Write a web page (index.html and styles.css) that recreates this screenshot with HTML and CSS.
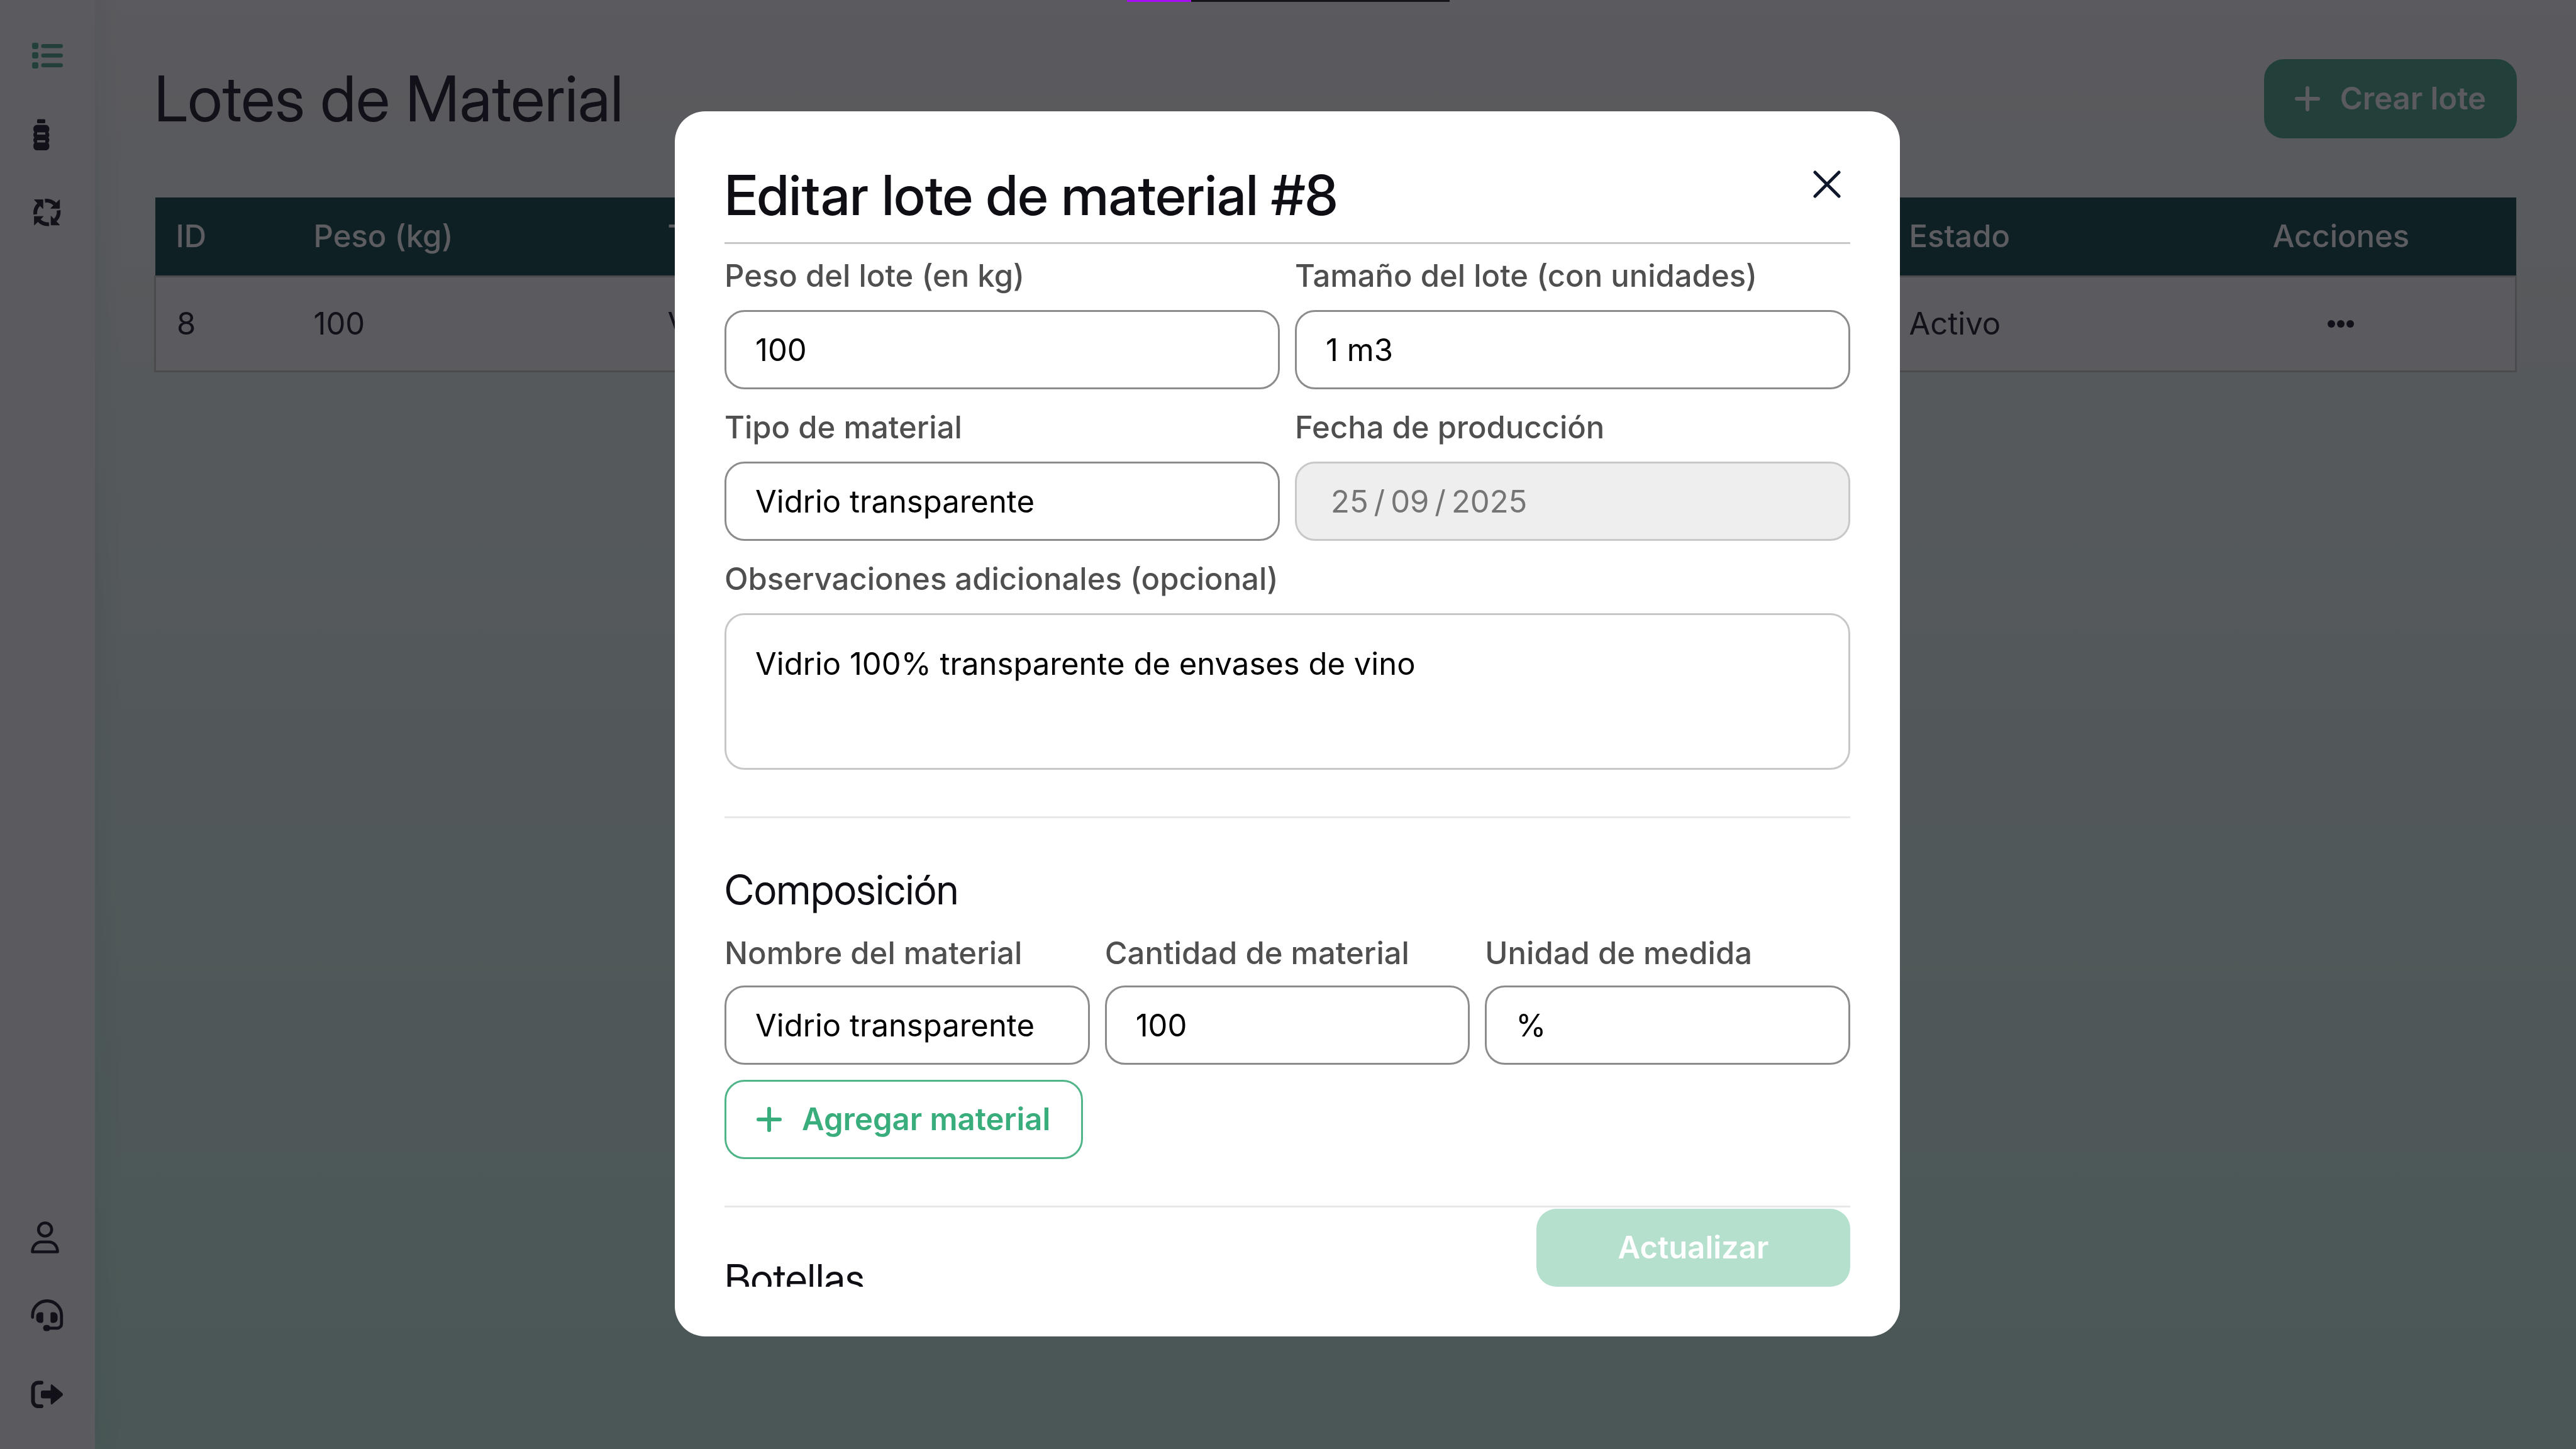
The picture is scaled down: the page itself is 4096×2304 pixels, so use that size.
FILE: index.html
```html
<!DOCTYPE html>
<html lang="es">
<head>
<meta charset="utf-8">
<meta name="viewport" content="width=device-width, initial-scale=1">
<title>Lotes de Material</title>
<link rel="stylesheet" href="styles.css">
</head>
<body>
<div class="app">
  <nav class="sidebar" aria-label="Principal">
    <div class="sidebar-group">
      <a class="nav-link active" href="#lotes" aria-label="Lotes">
        <svg class="nav-icon" viewBox="0 0 74 74" fill="currentColor"><rect x="13" y="17" width="10" height="10" rx="3"/><rect x="13" y="32" width="10" height="10" rx="3"/><rect x="13" y="48" width="10" height="10" rx="3"/><rect x="27.500" y="19" width="34.500" height="6.500" rx="3.200"/><rect x="27.500" y="34" width="34.500" height="6.500" rx="3.200"/><rect x="27.500" y="49.500" width="34.500" height="6.500" rx="3.200"/></svg>
      </a>
      <a class="nav-link" href="#botellas" aria-label="Botellas">
        <svg class="nav-icon" viewBox="0 0 74 74" fill="currentColor"><rect x="21" y="13.500" width="13" height="6.500" rx="1.500"/><path fill-rule="evenodd" d="M21 22.500H34.500C38 22.500 40.500 25.500 40.500 29Q40.500 32 38.800 34Q40.500 36 40.500 38.500T38.800 42.700Q40.500 44.500 40.500 46.500T38.800 51Q40.500 53 40.500 56C40.500 60.500 38 63 34.500 63H21C17.500 63 15 60.500 15 56Q15 53 16.700 51Q15 48.500 15 46.500T16.700 42.700Q15 41 15 38.500T16.700 34Q15 32 15 29C15 25.500 17.500 22.500 21 22.500ZM21 34.500V38H34V34.500ZM21 47V50.500H34V47Z"/></svg>
      </a>
      <a class="nav-link" href="#reciclaje" aria-label="Reciclaje">
        <svg class="nav-icon" viewBox="0 0 74 74"><defs><g id="arrow"><path d="M-3.200 -18.500A18.500 18.500 0 0 1 12.500 -13" fill="none" stroke="currentColor" stroke-width="6"/><path d="M20 -20V-6.500H6Z" fill="currentColor" stroke="currentColor" stroke-linejoin="round"/></g></defs><g transform="translate(36.700 36.700)"><use href="#arrow"/><use href="#arrow" transform="rotate(90)"/><use href="#arrow" transform="rotate(180)"/><use href="#arrow" transform="rotate(270)"/></g></svg>
      </a>
    </div>
    <div class="sidebar-group">
      <a class="nav-link" href="#perfil" aria-label="Perfil">
        <svg class="nav-icon" viewBox="0 0 74 74" fill="none" stroke="currentColor" stroke-width="4.600" stroke-linejoin="round"><circle cx="33.700" cy="25" r="10.500"/><path d="M13.500 60.500C13.500 51 20 44.800 28 44.800H39.500C47.500 44.800 53.500 51 53.500 60.500Z"/></svg>
      </a>
      <a class="nav-link" href="#soporte" aria-label="Soporte">
        <svg class="nav-icon" viewBox="0 0 74 74" fill="currentColor"><path d="M13.800 39.500V36.500A23 23 0 0 1 59.800 36.500V50A6.800 6.800 0 0 1 53 56.800H37" fill="none" stroke="currentColor" stroke-width="4.800" stroke-linecap="round"/><rect x="30.500" y="51.800" width="11.500" height="9.800" rx="4.800"/><path d="M28 31.400H26C22 31.400 19.600 34.500 19.600 38V42C19.600 45.500 22 48.400 26 48.400H28Q30.800 48.400 30.800 45.600V34.200Q30.800 31.400 28 31.400ZM45.100 31.400H47.100C51 31.400 53.600 34.500 53.600 38V42C53.600 45.500 51 48.400 47.100 48.400H45.100Q42.300 48.400 42.300 45.600V34.200Q42.300 31.400 45.100 31.400Z"/></svg>
      </a>
      <a class="nav-link" href="#salir" aria-label="Salir">
        <svg class="nav-icon" viewBox="0 0 74 74" fill="currentColor"><path d="M28 18.500H23A8.500 8.500 0 0 0 14.500 27V47.500A8.500 8.500 0 0 0 23 56H28" fill="none" stroke="currentColor" stroke-width="6" stroke-linecap="round"/><path d="M30 31H42.600V24Q42.600 19.500 46 22.500L61 35Q63.200 37.300 61 39.500L46 52Q42.600 55 42.600 50.500V43.500H30Q27 43.500 27 40.500V34Q27 31 30 31Z"/></svg>
      </a>
    </div>
  </nav>

  <main class="main">
    <header class="page-header">
      <h1 class="page-title">Lotes de Material</h1>
      <button class="btn btn-primary" type="button">
        <svg class="plus" viewBox="0 0 40 40"><path d="M20 3V37M3 20H37"/></svg>
        Crear lote
      </button>
    </header>
    <table class="lots">
      <thead>
        <tr><th class="col-id">ID</th><th class="col-weight">Peso (kg)</th><th>Tipo</th><th class="col-state">Estado</th><th class="col-actions">Acciones</th></tr>
      </thead>
      <tbody>
        <tr>
          <td>8</td><td>100</td><td>Vidrio transparente</td><td>Activo</td>
          <td class="col-actions"><button class="row-menu" type="button" aria-label="Acciones del lote 8"><svg class="dots" viewBox="0 0 44 14" fill="currentColor"><circle cx="7" cy="7" r="6"/><circle cx="22" cy="7" r="6"/><circle cx="37" cy="7" r="6"/></svg></button></td>
        </tr>
      </tbody>
    </table>
  </main>
</div>

<div class="backdrop">
  <section class="modal" role="dialog" aria-modal="true" aria-labelledby="modal-title">
    <header class="modal-header">
      <h2 class="modal-title" id="modal-title">Editar lote de material #8</h2>
      <button class="close" type="button" aria-label="Cerrar"><svg class="close-icon" viewBox="0 0 44 44"><path d="M3 3L41 41M41 3L3 41"/></svg></button>
    </header>
    <form class="modal-body">
      <div class="row two">
        <div class="field"><label for="peso">Peso del lote (en kg)</label><input id="peso" type="text" value="100"></div>
        <div class="field"><label for="tamano">Tamaño del lote (con unidades)</label><input id="tamano" type="text" value="1 m3"></div>
      </div>
      <div class="row two">
        <div class="field"><label for="tipo">Tipo de material</label><input id="tipo" type="text" value="Vidrio transparente"></div>
        <div class="field"><label for="fecha">Fecha de producción</label><input class="date" id="fecha" type="text" value="25&#8201;/&#8201;09&#8201;/&#8201;2025" disabled></div>
      </div>
      <div class="field"><label for="obs">Observaciones adicionales (opcional)</label><textarea id="obs">Vidrio 100% transparente de envases de vino</textarea></div>
      <hr class="divider">
      <h3 class="section-title">Composición</h3>
      <div class="row three">
        <div class="field"><label for="nombre">Nombre del material</label><input id="nombre" type="text" value="Vidrio transparente"></div>
        <div class="field"><label for="cantidad">Cantidad de material</label><input id="cantidad" type="text" value="100"></div>
        <div class="field"><label for="unidad">Unidad de medida</label><input id="unidad" type="text" value="%"></div>
      </div>
      <button class="btn btn-outline" type="button">
        <svg class="plus" viewBox="0 0 40 40"><path d="M20 3V37M3 20H37"/></svg>
        Agregar material
      </button>
      <hr class="divider">
      <h3 class="section-title">Botellas</h3>
    </form>
    <button class="btn btn-submit" type="submit" disabled>Actualizar</button>
  </section>
</div>
<div class="loader"><div class="loader-value"></div></div>
</body>
</html>
```

FILE: styles.css
```css
* { box-sizing: border-box; }

body {
  margin: 0;
  font-family: Inter, "Liberation Sans", sans-serif;
  font-size: 49px;
  line-height: 74px;
  color: #2d2a3c;
  overflow: hidden;
}

h1, h2, h3 {
  margin: 0;
  font-family: "Inter Display", Inter, "Liberation Sans", sans-serif;
  font-weight: 400;
  font-variation-settings: "opsz" 32;
}

button, input, textarea { font: inherit; }

/* Application shell */
.app {
  display: flex;
  min-height: 100vh;
  background: linear-gradient(#e3e1eb, #b9d9d7);
}

.sidebar {
  display: flex;
  flex-direction: column;
  justify-content: space-between;
  width: 151px;
  padding: 51px 0 50px;
  background: #e3e1eb;
  box-shadow: 0 0 40px rgba(30, 120, 100, 0.12);
}

.sidebar-group { display: flex; flex-direction: column; gap: 51px; }

.nav-link { display: block; height: 74px; padding-left: 38px; color: #2d2a3c; }
.nav-link.active { color: #55a08e; }
.nav-icon { display: block; width: 74px; height: 74px; }

.main { flex: 1; padding: 94px 94px 0; }

.page-header {
  display: flex;
  align-items: center;
  justify-content: space-between;
  margin-bottom: 94px;
}

.page-title { font-size: 100px; line-height: 126px; }

.btn {
  display: inline-flex;
  align-items: center;
  justify-content: center;
  gap: 32px;
  height: 126px;
  padding: 0 46px;
  border: 3px solid transparent;
  border-radius: 32px;
  font-weight: 600;
}

.btn-primary { background: #55a08e; border-color: #55a08e; color: #e3e1eb; }

.plus {
  width: 40px;
  height: 40px;
  fill: none;
  stroke: currentColor;
  stroke-width: 6;
  stroke-linecap: round;
}

.lots {
  width: 100%;
  table-layout: fixed;
  border-collapse: collapse;
}

.lots th {
  height: 125px;
  padding: 0 33px;
  background: #23525a;
  color: #e9e7ef;
  font-weight: 500;
  text-align: left;
}

.lots td { height: 151px; padding: 0 33px; }
.lots tbody tr { background: #e3e1eb; border: 3px solid #bcbbc2; }
.lots .col-id { width: 219px; }
.lots .col-weight { width: 563px; }
.lots .col-state { width: 442px; }
.lots .col-actions { width: 556px; text-align: center; }

.row-menu {
  display: block;
  margin: 0 auto;
  padding: 0;
  border: 0;
  background: none;
  color: inherit;
}

.dots { display: block; width: 44px; height: 14px; margin: 30px 0; }

/* Dialog */
.backdrop {
  position: fixed;
  inset: 0;
  display: flex;
  align-items: flex-start;
  justify-content: center;
  padding: 177px 2px 0 0;
  background: rgba(0, 0, 0, 0.6);
}

.modal {
  position: relative;
  display: flex;
  flex-direction: column;
  width: 1948px;
  max-width: 90%;
  max-height: calc(100vh - 356px);
  padding: 79px;
  border-radius: 48px;
  background: #fff;
  color: #0e0e14;
}

.modal-header {
  display: flex;
  align-items: flex-start;
  justify-content: space-between;
  padding-bottom: 21px;
  border-bottom: 3px solid #c8c8c8;
}

.modal-title { font-size: 88px; line-height: 108px; font-weight: 500; }

.close {
  display: grid;
  place-items: center;
  width: 74px;
  height: 74px;
  padding: 0;
  border: 0;
  background: none;
}

.close-icon {
  width: 44px;
  height: 44px;
  fill: none;
  stroke: #0f172a;
  stroke-width: 5;
  stroke-linecap: round;
}

.modal-body {
  display: flex;
  flex: 1;
  flex-direction: column;
  gap: 24px;
  min-height: 0;
  padding-top: 14px;
  overflow: hidden;
}

.modal-body > * { flex-shrink: 0; }

.row { display: grid; gap: 24px; }
.two { grid-template-columns: repeat(2, 1fr); }
.three { grid-template-columns: repeat(3, 1fr); }

.field { display: flex; flex-direction: column; gap: 17px; min-width: 0; }
.three .field { gap: 14px; }
.field label { color: #4f4f4f; font-weight: 500; }

.field input,
.field textarea {
  width: 100%;
  height: 126px;
  padding: 0 46px;
  border: 3px solid #8c8c8c;
  border-radius: 32px;
  background: #fff;
  color: #000;
}

.field textarea {
  display: block;
  height: 249px;
  padding: 41px 46px;
  border-color: #c8c8c8;
  resize: none;
  overflow: hidden;
}

.field .date {
  padding-left: 54px;
  border-color: #c8c8c8;
  background: #eee;
  color: #757575;
}

.divider {
  width: 100%;
  height: 3px;
  margin: 50px 0;
  border: 0;
  background: #e8e8eb;
}

.section-title { font-size: 65px; line-height: 80px; }

.btn-outline {
  align-self: flex-start;
  padding: 0 49px 0 48px;
  border-color: #4fb588;
  background: #fff;
  color: #3aad7d;
}

.btn-submit {
  position: absolute;
  right: 79px;
  bottom: 79px;
  width: 499px;
  height: 124px;
  border: 0;
  background: #b4e0cd;
  color: #fff;
}

/* Page load indicator */
.loader {
  position: fixed;
  top: 0;
  left: 0;
  right: 0;
  width: 513px;
  height: 3px;
  margin: 0 auto;
  background: #17161a;
}

.loader-value { width: 20%; height: 3px; background: #a80cf4; }
```
